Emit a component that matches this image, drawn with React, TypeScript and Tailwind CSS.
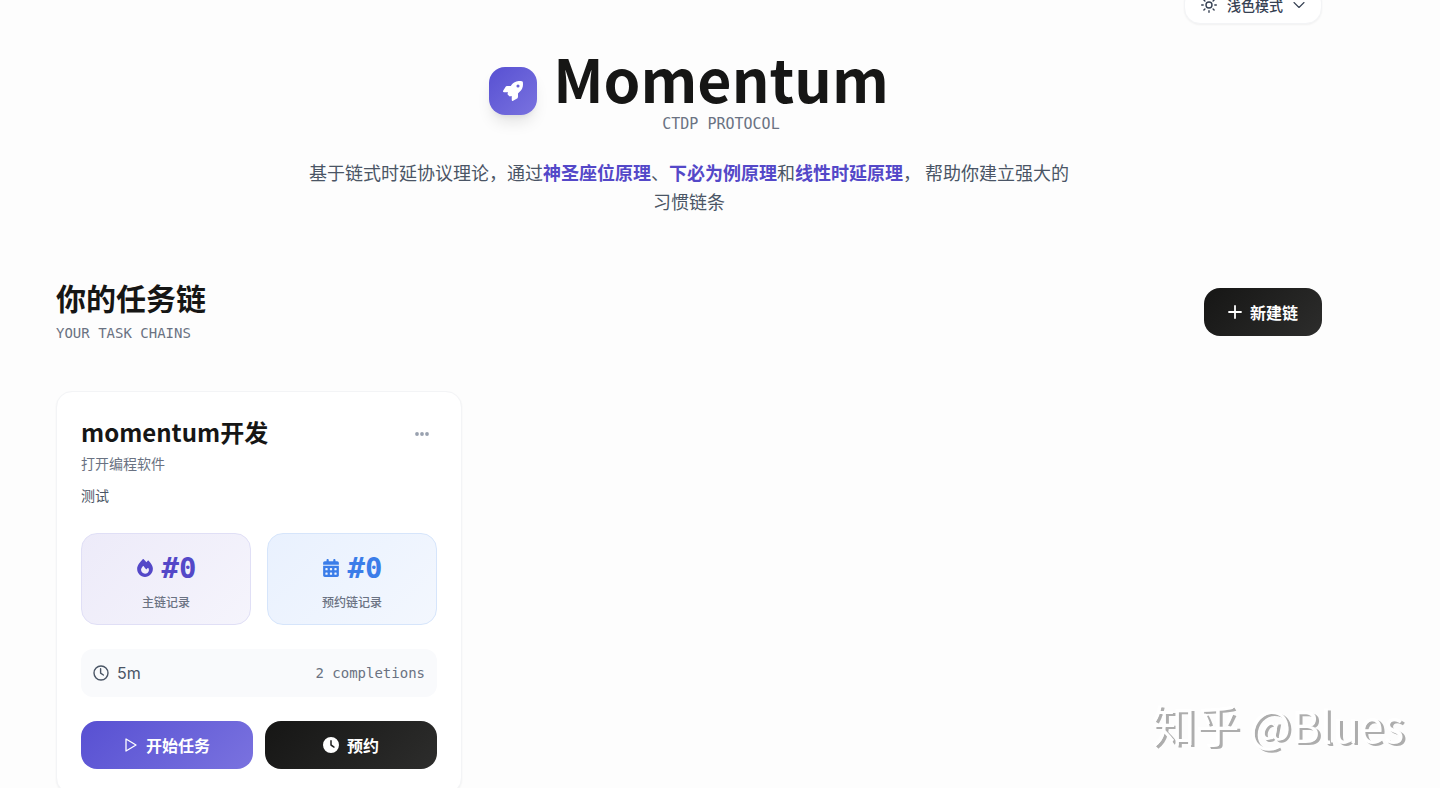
import type { ReactNode } from "react";
import { FaCalendarDays, FaClock, FaFire, FaRocket } from "react-icons/fa6";

interface StatProps {
  icon: ReactNode;
  label: string;
  value: number;
  className: string;
  valueClassName: string;
}

interface Chain {
  name: string;
  trigger: string;
  description: string;
  mainCount: number;
  bookedCount: number;
  duration: string;
  completions: number;
}

const chains: Chain[] = [
  {
    name: "momentum开发",
    trigger: "打开编程软件",
    description: "测试",
    mainCount: 0,
    bookedCount: 0,
    duration: "5m",
    completions: 2,
  },
];

const SunIcon = () => (
  <svg viewBox="0 0 16 16" className="size-4" fill="none" stroke="currentColor" strokeWidth="1.4" strokeLinecap="round">
    <circle cx="8" cy="8" r="3" />
    <path d="M8 .7v1.5M8 13.8v1.5M.7 8h1.5M13.8 8h1.5M2.9 2.9l1 1M12.1 12.1l1 1M2.9 13.1l1-1M12.1 3.9l1-1" />
  </svg>
);

const ChevronIcon = () => (
  <svg viewBox="0 0 12 12" className="size-3" fill="none" stroke="currentColor" strokeWidth="1.1" strokeLinecap="round" strokeLinejoin="round">
    <path d="M1 3.5l5 5 5-5" />
  </svg>
);

const PlusIcon = () => (
  <svg viewBox="0 0 14 14" className="size-3.5" fill="none" stroke="currentColor" strokeWidth="1.8" strokeLinecap="round">
    <path d="M7 1v12M1 7h12" />
  </svg>
);

const ClockIcon = () => (
  <svg viewBox="0 0 16 16" className="size-4" fill="none" stroke="currentColor" strokeWidth="1.4" strokeLinecap="round" strokeLinejoin="round">
    <circle cx="8" cy="8" r="7" />
    <path d="M7.6 3.8V8.2l2.8 1.8" />
  </svg>
);

const PlayIcon = () => (
  <svg viewBox="0 0 14 14" className="size-3.5" fill="none" stroke="currentColor" strokeWidth="1.3" strokeLinejoin="round">
    <path d="M2 1v12l10-6z" />
  </svg>
);

const Stat = ({ icon, label, value, className, valueClassName }: StatProps) => (
  <div className={`flex flex-col items-center rounded-2xl border bg-linear-135 pt-4 pb-3 ${className}`}>
    <div className={`flex items-center gap-2 ${valueClassName}`}>
      {icon}
      <span className="font-[DejaVu_Sans_Mono,monospace] text-[29px] leading-9 font-bold">#{value}</span>
    </div>
    <p className="mt-1.5 text-xs leading-5 font-medium text-gray-500">{label}</p>
  </div>
);

const ChainCard = ({ chain }: { chain: Chain }) => (
  <article className="rounded-2xl border border-gray-100 bg-white p-6 shadow-xs">
    <div className="flex items-start justify-between">
      <div>
        <h3 className="text-2xl leading-8 font-bold text-[#161615]">{chain.name}</h3>
        <p className="mt-[5px] text-sm leading-5 text-gray-500">{chain.trigger}</p>
      </div>
      <button type="button" aria-label="更多" className="mt-2 p-2 text-gray-400">
        <svg viewBox="0 0 14 4" className="h-1 w-3.5" fill="currentColor">
          <circle cx="2" cy="2" r="1.9" />
          <circle cx="7" cy="2" r="1.9" />
          <circle cx="12" cy="2" r="1.9" />
        </svg>
      </button>
    </div>
    <p className="mt-3 text-sm leading-5 text-gray-600">{chain.description}</p>

    <div className="mt-7 grid grid-cols-2 gap-4">
      <Stat
        icon={<FaFire className="size-4.5" />}
        label="主链记录"
        value={chain.mainCount}
        className="border-[#e0dff6] from-[#edebf9] to-[#f5f4fc]"
        valueClassName="text-[#5448c8]"
      />
      <Stat
        icon={<FaCalendarDays className="size-4.5" />}
        label="预约链记录"
        value={chain.bookedCount}
        className="border-[#d6e5fb] from-[#e9f1fe] to-[#f3f7fe]"
        valueClassName="text-[#3b7de9]"
      />
    </div>

    <div className="mt-6 flex items-center justify-between rounded-xl bg-[#f9fafc] p-3 leading-6">
      <span className="flex items-center gap-2 font-[Inter,sans-serif] text-gray-600">
        <ClockIcon />
        {chain.duration}
      </span>
      <span className="font-[DejaVu_Sans_Mono,monospace] text-sm text-gray-500">
        {chain.completions} completions
      </span>
    </div>

    <div className="mt-6 grid grid-cols-2 gap-3 font-bold text-white">
      <button type="button" className="flex items-center justify-center gap-2 rounded-2xl bg-linear-135 from-[#5850d2] to-[#7a72df] py-3">
        <PlayIcon />
        开始任务
      </button>
      <button type="button" className="flex items-center justify-center gap-2 rounded-2xl bg-linear-135 from-[#161615] to-[#2d2d2c] py-3">
        <FaClock className="size-4" />
        预约
      </button>
    </div>
  </article>
);

export default function App() {
  return (
    <div className="min-h-screen overflow-hidden bg-[#fdfdfd] pr-[118px] pb-12 pl-14 font-[Noto_Sans_CJK_SC,sans-serif]">
      <div className="-mt-3.5 flex justify-end">
        <button type="button" className="flex items-center gap-2.5 rounded-2xl border border-gray-100 bg-white px-4 py-2 text-sm font-medium text-gray-700 shadow-xs">
          <SunIcon />
          浅色模式
          <ChevronIcon />
        </button>
      </div>

      <header className="mt-6 flex flex-col items-center">
        <div className="flex items-center gap-4">
          <div className="grid size-12 place-items-center rounded-2xl bg-linear-135 from-[#5850d2] to-[#7a72df] text-white shadow-lg">
            <FaRocket className="size-5" />
          </div>
          <div className="text-center">
            <h1 className="text-[59px] leading-[60px] font-bold text-[#161615]">Momentum</h1>
            <p className="mt-1.5 font-[DejaVu_Sans_Mono,monospace] text-[15px] leading-5 text-gray-500">CTDP PROTOCOL</p>
          </div>
        </div>
        <p className="mt-6 max-w-3xl text-center text-lg leading-[29px] text-gray-600">
          基于链式时延协议理论，通过
          <strong className="text-[#5448c8]">神圣座位原理</strong>、
          <strong className="text-[#5448c8]">下必为例原理</strong>和
          <strong className="text-[#5448c8]">线性时延原理</strong>， 帮助你建立强大的习惯链条
        </p>
      </header>

      <main className="mt-[63px]">
        <div className="flex items-center justify-between">
          <div>
            <h2 className="text-3xl leading-9 font-bold text-[#161615]">你的任务链</h2>
            <p className="mt-1.5 font-[DejaVu_Sans_Mono,monospace] text-sm leading-6 text-gray-500">YOUR TASK CHAINS</p>
          </div>
          <button type="button" className="flex items-center gap-2 rounded-2xl bg-linear-135 from-[#161615] to-[#2d2d2c] px-6 py-3 font-bold text-white">
            <PlusIcon />
            新建链
          </button>
        </div>

        <div className="mt-[46px] grid grid-cols-1 gap-6 md:grid-cols-2 lg:grid-cols-3">
          {chains.map((chain) => (
            <ChainCard key={chain.name} chain={chain} />
          ))}
        </div>
      </main>

      <p className="pointer-events-none fixed right-9 bottom-8 text-[44px] leading-[64px] text-white text-shadow-[3px_2px_0_#adadad]">
        知乎 @Blues
      </p>
    </div>
  );
}
